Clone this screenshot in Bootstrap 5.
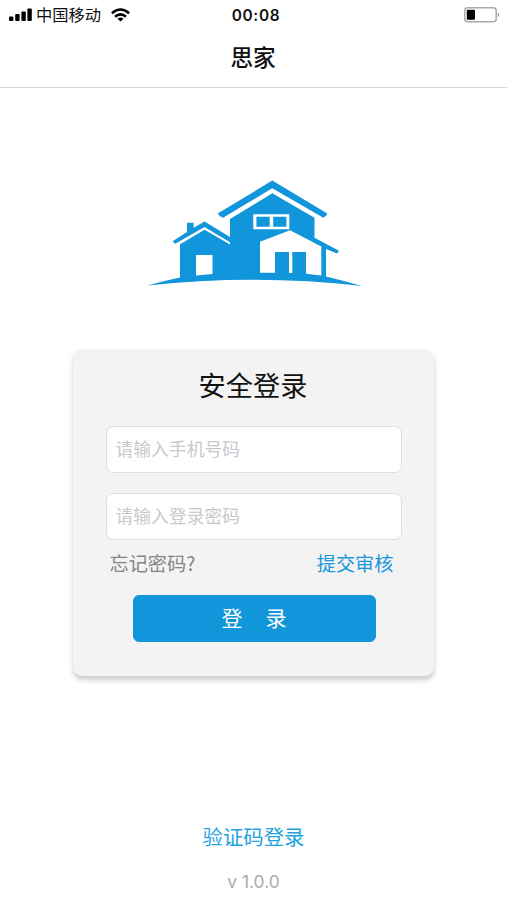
<!DOCTYPE html>
<html lang="zh-CN">
<head>
<meta charset="utf-8">
<meta name="viewport" content="width=device-width, initial-scale=1">
<title>思家</title>
<link href="https://cdn.jsdelivr.net/npm/bootstrap@5.3.0/dist/css/bootstrap.min.css" rel="stylesheet">
<style>
body{font-family:"Noto Sans CJK SC",sans-serif;color:#111;line-height:1;overflow:hidden}
.screen{height:900px}
.status-bar{height:30px;padding:0 7px 0 9px}
.status-bar>div{flex:1 1 0}
.carrier{font-size:16.3px;margin:-2px 10px 0 4px}
.clock{font:600 15.4px/1 Inter,sans-serif;letter-spacing:.7px;padding:1px 0 0 3px}
.title-bar{height:58px;border-bottom:1px solid #d8d8d8;font-size:22.6px;font-weight:500;padding:0 1px 3px 0}
.logo{margin-top:82px;height:125px}
.login-card{width:361px;height:327px;margin:54px 1px 0 0;background:#f3f3f3;border-radius:9px;box-shadow:0 4px 5px rgba(0,0,0,.2);padding:0 32px 0 33px}
.login-title{font-size:27.2px;line-height:40px;margin:15px 1px 22px 0;font-weight:400}
.login-card .form-control{height:47px;border-color:#dedfe1;border-radius:7px;font-size:17.8px;padding:0 9px 3px}
.form-control::placeholder{color:#c8c8cd;opacity:1}
.second-field{margin-top:20px}
.links{height:55px;padding:0 8px 7px 4px;font-size:19.2px}
.links a{color:#1b96db}
.links .forgot{color:#858585}
.login-btn{width:243px;height:47px;background:#1296db;border-color:#1296db;border-radius:6px;font-size:21px;line-height:1;padding:0 0 2px;margin-left:27px}
.login-btn span+span{margin-left:23px}
.code-login{font-size:20.4px;color:#22a3dd}
.version{font:17.4px/1 Inter,sans-serif;color:#aaa;margin-top:26px;margin-bottom:10px}
</style>
<script src="https://cdn.jsdelivr.net/npm/bootstrap@5.3.0/dist/js/bootstrap.bundle.min.js"></script>
</head>
<body class="bg-white">
<main class="screen d-flex flex-column">
  <header>
    <div class="status-bar d-flex align-items-center">
      <div class="d-flex align-items-center">
        <svg width="23" height="14" viewBox="0 0 23 14"><rect y="8.5" width="4.4" height="4.5" rx="1"/><rect x="6.2" y="6" width="4.4" height="7" rx="1"/><rect x="12.4" y="3.5" width="4.4" height="9.5" rx="1"/><rect x="18.4" y=".5" width="4.4" height="12.5" rx="1"/></svg>
        <span class="carrier">中国移动</span>
        <svg width="19" height="14" viewBox="0 0 19 14" fill="none" stroke="#000" stroke-width="2.5"><path d="M.9 5.2Q9.5-2.3 18.1 5.2M4 8.7q5.5-4.6 11 0"/><path d="M9.5 13.5 6.5 10.7q3-2.2 6 0z" fill="#000" stroke="none"/></svg>
      </div>
      <span class="clock">00:08</span>
      <div class="d-flex justify-content-end"><svg width="36" height="16" viewBox="0 0 36 16"><rect x=".8" y=".8" width="31.4" height="14" rx="3" fill="#fff" stroke="#aaa" stroke-width="1.5"/><rect x="2.8" y="2.8" width="8.2" height="10" rx="1"/><path d="M33.7 5.2q3 2.5 0 5z" fill="#999"/></svg></div>
    </div>
    <h1 class="title-bar d-flex align-items-center justify-content-center mb-0">思家</h1>
  </header>
  <svg class="logo align-self-center flex-shrink-0" width="227" viewBox="140 170 227 125" fill="#1296db" role="img" aria-label="思家">
    <path d="M147.3 285.5Q163 281 180 277.5V244.3L204.5 229.7 230 244.5V219L272.3 193.3 314.5 217.8V237.8L339 250.8 337 253.5 326 249V276.5Q345 281 362 286 255 274 147.3 285.5Z"/>
    <path d="M217.7 213.6 272.3 180.5 327.3 213.6Q326.5 216.5 323.3 217.8L272.3 188.2 223 217.8Q219.5 217 217.7 213.6Z"/>
    <path d="M172.6 241.2 187 232V222.7H193.6V227.8L204.5 221.5 230 237V242.3L204.5 227 175.3 243.7Z"/>
    <path fill="#fff" d="M196 255H212.5V274L196 275.5ZM253.3 214.3H289.3V229.3H253.3ZM260 241.8 290 230.2 321.3 246.5V275.5L306 273.8V252H292.3V273H289V252H275V272.8H260Z"/>
    <path d="M256.4 216.8H269.7V226.8H256.4ZM273.2 216.8H286.4V226.8H273.2Z"/>
  </svg>
  <form class="login-card align-self-center flex-shrink-0 d-flex flex-column">
    <h2 class="login-title text-center">安全登录</h2>
    <input class="form-control" type="tel" placeholder="请输入手机号码" aria-label="手机号码">
    <input class="form-control second-field" type="password" placeholder="请输入登录密码" aria-label="登录密码">
    <div class="links d-flex justify-content-between align-items-center">
      <a class="forgot text-decoration-none" href="#">忘记密码?</a>
      <a class="text-decoration-none" href="#">提交审核</a>
    </div>
    <button class="login-btn btn btn-primary" type="button"><span>登</span><span>录</span></button>
  </form>
  <footer class="mt-auto text-center">
    <a class="code-login text-decoration-none" href="#">验证码登录</a>
    <div class="version">v 1.0.0</div>
  </footer>
</main>
</body>
</html>
